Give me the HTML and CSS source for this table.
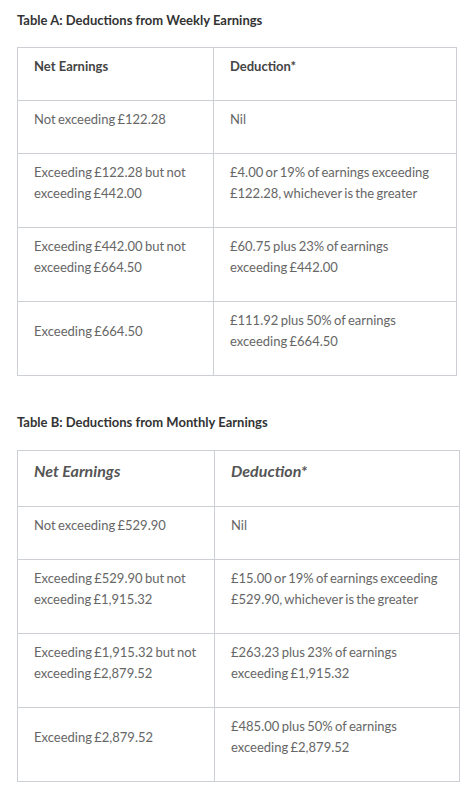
FILE: index.html
```html
<!DOCTYPE html>
<html>
<head>
<meta charset="utf-8">
<link rel="stylesheet" href="styles.css">
</head>
<body>
<div class="page">
  <p class="caption caption-a">Table A: Deductions from Weekly Earnings</p>
  <table class="rates rates-a">
    <colgroup><col class="c1a"><col></colgroup>
    <tr class="head"><td><p>Net Earnings</p></td><td><p>Deduction*</p></td></tr>
    <tr><td><p>Not exceeding £122.28</p></td><td><p>Nil</p></td></tr>
    <tr><td><p>Exceeding £122.28 but not exceeding £442.00</p></td><td><p>£4.00 or 19% of earnings exceeding £122.28, whichever is the greater</p></td></tr>
    <tr><td><p>Exceeding £442.00 but not exceeding £664.50</p></td><td><p>£60.75 plus 23% of earnings exceeding £442.00</p></td></tr>
    <tr><td><p>Exceeding £664.50</p></td><td><p>£111.92 plus 50% of earnings exceeding £664.50</p></td></tr>
  </table>
  <p class="caption caption-b">Table B: Deductions from Monthly Earnings</p>
  <table class="rates rates-b">
    <colgroup><col class="c1b"><col></colgroup>
    <tr class="head italic"><td><p>Net Earnings</p></td><td><p>Deduction*</p></td></tr>
    <tr><td><p>Not exceeding £529.90</p></td><td><p>Nil</p></td></tr>
    <tr><td><p>Exceeding £529.90 but not exceeding £1,915.32</p></td><td><p>£15.00 or 19% of earnings exceeding £529.90, whichever is the greater</p></td></tr>
    <tr><td><p>Exceeding £1,915.32 but not exceeding £2,879.52</p></td><td><p>£263.23 plus 23% of earnings exceeding £1,915.32</p></td></tr>
    <tr><td><p>Exceeding £2,879.52</p></td><td><p>£485.00 plus 50% of earnings exceeding £2,879.52</p></td></tr>
  </table>
</div>
</body>
</html>
```
FILE: styles.css
```css
html, body {
  margin: 0;
  padding: 0;
  background: #fff;
}
.page {
  padding: 0 0 0 17px;
  font-family: Lato, "Open Sans", sans-serif;
  color: #666;
}
.caption {
  font-size: 13px;
  line-height: 21px;
  font-weight: bold;
  color: #333;
  margin: 0;
}
.caption-a {
  padding-top: 10px;
  margin-bottom: 16px;
}
.caption-b {
  margin-top: 36px;
  margin-bottom: 17px;
}
.rates {
  border-collapse: collapse;
  table-layout: fixed;
  font-size: 13px;
  line-height: 21px;
  word-spacing: -1px;
}
.rates-a { width: 440px; }
.rates-b { width: 443px; }
.c1a { width: 196px; }
.c1b { width: 197px; }
.rates td {
  border: 1px solid #ccd0d5;
  padding: 8px 16px;
  vertical-align: middle;
}
.rates p {
  margin: 0 0 15px;
}
.head td {
  font-weight: bold;
  color: #444;
  word-spacing: 0;
}
.italic td {
  font-style: italic;
  font-size: 16px;
  line-height: 24px;
  color: #555;
}
```
